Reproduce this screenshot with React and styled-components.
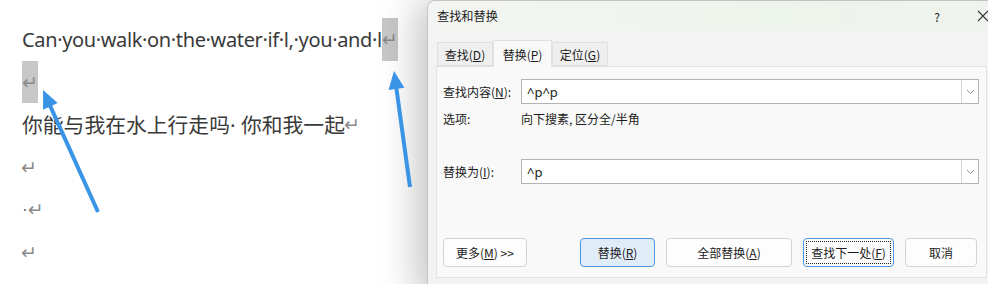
import React from 'react';
import styled, { createGlobalStyle } from 'styled-components';

const GlobalStyle = createGlobalStyle`
  html, body {
    margin: 0;
    padding: 0;
    background: #ffffff;
    overflow: hidden;
  }
`;

const arrowBlue = '#3a94e6';
const uiFont = `"Noto Sans CJK SC", "Noto Sans", sans-serif`;

const Page = styled.div`
  position: relative;
  display: flex;
  width: 988px;
  height: 284px;
  overflow: hidden;
  background: #ffffff;
`;

const Doc = styled.div`
  flex: 0 0 427px;
  padding: 18px 0 0 22px;
  box-sizing: border-box;
  font-family: "Noto Sans", "Noto Sans CJK SC", sans-serif;
  color: #3a3a3a;
`;

const Line = styled.div`
  display: flex;
  align-items: center;
  height: 42.5px;
  white-space: pre;
  font-size: ${p => p.$size || 20.5}px;
`;

const Words = styled.span`
  letter-spacing: ${p => p.$tight || 0}px;
`;

const Mark = styled.span`
  display: inline-flex;
  align-items: center;
  justify-content: center;
  width: ${p => (p.$boxed ? '16px' : '14px')};
  height: ${p => (p.$boxed ? '100%' : 'auto')};
  background: ${p => (p.$boxed ? '#c7c7c7' : 'transparent')};
  font-family: "DejaVu Sans", sans-serif;
  font-size: 19px;
  letter-spacing: 0;
  color: #8a8a8a;
`;

const Dot = styled.span`
  font-size: 14px;
  color: #555;
  margin: 0 2px 0 1px;
`;

const Dialog = styled.div`
  flex: 0 0 580px;
  height: 300px;
  box-sizing: border-box;
  border: 1px solid #c4c4c4;
  border-radius: 8px 8px 0 0;
  background: #f3f3f3;
  box-shadow: -8px 0 40px rgba(0, 0, 0, 0.26);
  font-family: ${uiFont};
  font-size: 12px;
  color: #1b1b1b;
  z-index: 1;
`;

const TitleBar = styled.div`
  display: flex;
  align-items: center;
  height: 30px;
  padding-left: 9px;
  border-radius: 8px 0 0 0;
  background: linear-gradient(90deg, #f3f5f2 0%, #edf4eb 60%, #eff3ee 100%);
`;

const Title = styled.span`
  flex: 1;
  font-size: 12.2px;
`;

const TitleButton = styled.span`
  display: flex;
  align-items: center;
  justify-content: center;
  width: 46px;
  font-size: 12px;
  color: #222;
`;

const TabList = styled.div`
  display: flex;
  align-items: flex-end;
  height: 35px;
  padding-left: 9px;
  position: relative;
  z-index: 1;
`;

const Tab = styled.div`
  display: flex;
  align-items: center;
  justify-content: center;
  box-sizing: border-box;
  width: ${p => p.$width}px;
  height: ${p => (p.$active ? 27 : 24)}px;
  margin-bottom: ${p => (p.$active ? -1 : 0)}px;
  border: 1px solid #e0e0e0;
  border-bottom: ${p => (p.$active ? 'none' : '1px solid #e0e0e0')};
  background: ${p => (p.$active ? '#f9f9f9' : '#efefef')};
  font-size: 12px;
`;

const Panel = styled.div`
  margin-left: 8px;
  width: 551px;
  height: 212px;
  box-sizing: border-box;
  border: 1px solid #e2e2e2;
  background: #f9f9f9;
  padding: 12px 0 0 6px;
  display: flex;
  flex-direction: column;
`;

const FieldRow = styled.div`
  display: flex;
  align-items: center;
  height: 25px;
  margin-top: ${p => p.$top || 0}px;
`;

const Label = styled.span`
  width: 78px;
  flex: 0 0 78px;
`;

const Combo = styled.div`
  display: flex;
  width: 458px;
  height: 25px;
  box-sizing: border-box;
  border: 1px solid #b4b4b4;
  background: #ffffff;
`;

const ComboText = styled.span`
  flex: 1;
  display: flex;
  align-items: center;
  padding-left: 5px;
  font-family: "Noto Sans", sans-serif;
  font-size: 13px;
  color: #222;
`;

const ComboArrow = styled.span`
  width: 16px;
  display: flex;
  align-items: center;
  justify-content: center;
  border-left: 1px solid #d6d6d6;
`;

const OptionsRow = styled.div`
  display: flex;
  align-items: center;
  height: 16px;
  margin-top: 6px;
`;

const ButtonRow = styled.div`
  display: flex;
  gap: 11px;
  margin-top: 54px;
`;

const Button = styled.div`
  position: relative;
  display: flex;
  align-items: center;
  justify-content: center;
  box-sizing: border-box;
  width: ${p => p.$width}px;
  height: 29px;
  margin-right: ${p => p.$gapAfter || 0}px;
  border: 1px solid ${p => (p.$primary || p.$focused ? '#4c97dc' : '#d3d3d3')};
  border-radius: 4px;
  background: ${p => (p.$primary ? '#e0edf9' : '#fdfdfd')};
  font-size: 12px;
  color: #1b1b1b;
  ${p =>
    p.$focused &&
    `
    &::after {
      content: '';
      position: absolute;
      inset: 2px;
      border: 1px dotted #222;
    }
  `}
`;

const Overlay = styled.svg`
  position: absolute;
  top: 0;
  left: 0;
  z-index: 2;
  pointer-events: none;
`;

const Chevron = () => (
  <svg width="9" height="6" viewBox="0 0 9 6">
    <path d="M1 1 L4.5 4.5 L8 1" fill="none" stroke="#8a8a8a" strokeWidth="1" />
  </svg>
);

const CloseIcon = () => (
  <svg width="12" height="12" viewBox="0 0 12 12">
    <path d="M1 1 L11 11 M11 1 L1 11" stroke="#333" strokeWidth="1.1" />
  </svg>
);

const Arrow = ({ from, to }) => {
  const dx = to[0] - from[0];
  const dy = to[1] - from[1];
  const len = Math.hypot(dx, dy);
  const ux = dx / len;
  const uy = dy / len;
  const head = 18;
  const half = 8;
  const bx = to[0] - ux * head;
  const by = to[1] - uy * head;
  const p1 = [bx - uy * half, by + ux * half];
  const p2 = [bx + uy * half, by - ux * half];
  return (
    <g>
      <line x1={from[0]} y1={from[1]} x2={bx + ux * 2} y2={by + uy * 2} stroke={arrowBlue} strokeWidth="4" />
      <polygon points={`${to[0]},${to[1]} ${p1[0]},${p1[1]} ${p2[0]},${p2[1]}`} fill={arrowBlue} />
    </g>
  );
};

export default function App() {
  return (
    <>
      <GlobalStyle />
      <Page>
        <Doc>
          <Line $size={20}>
            <Words $tight={-0.36}>Can·you·walk·on·the·water·if·l,·you·and·l</Words>
            <Mark $boxed>↵</Mark>
          </Line>
          <Line>
            <Mark $boxed>↵</Mark>
          </Line>
          <Line $size={20.8}>
            <Words>你能与我在水上行走吗· 你和我一起</Words>
            <Mark>↵</Mark>
          </Line>
          <Line>
            <Mark>↵</Mark>
          </Line>
          <Line>
            <Dot>·</Dot>
            <Mark>↵</Mark>
          </Line>
          <Line>
            <Mark>↵</Mark>
          </Line>
        </Doc>

        <Dialog>
          <TitleBar>
            <Title>查找和替换</Title>
            <TitleButton>?</TitleButton>
            <TitleButton>
              <CloseIcon />
            </TitleButton>
          </TitleBar>
          <TabList>
            <Tab $width={56}>
              查找(<u>D</u>)
            </Tab>
            <Tab $width={59} $active>
              替换(<u>P</u>)
            </Tab>
            <Tab $width={56}>
              定位(<u>G</u>)
            </Tab>
          </TabList>
          <Panel>
            <FieldRow>
              <Label>
                查找内容(<u>N</u>):
              </Label>
              <Combo>
                <ComboText>^p^p</ComboText>
                <ComboArrow>
                  <Chevron />
                </ComboArrow>
              </Combo>
            </FieldRow>
            <OptionsRow>
              <Label>选项:</Label>
              <span>向下搜素, 区分全/半角</span>
            </OptionsRow>
            <FieldRow $top={33}>
              <Label>
                替换为(<u>I</u>):
              </Label>
              <Combo>
                <ComboText>^p</ComboText>
                <ComboArrow>
                  <Chevron />
                </ComboArrow>
              </Combo>
            </FieldRow>
            <ButtonRow>
              <Button $width={84} $gapAfter={42}>
                更多(<u>M</u>) &gt;&gt;
              </Button>
              <Button $width={75} $primary>
                替换(<u>R</u>)
              </Button>
              <Button $width={126}>
                全部替换(<u>A</u>)
              </Button>
              <Button $width={91} $focused>
                查找下一处(<u>F</u>)
              </Button>
              <Button $width={72}>取消</Button>
            </ButtonRow>
          </Panel>
        </Dialog>

        <Overlay width="988" height="284" viewBox="0 0 988 284">
          <Arrow from={[98, 212]} to={[43, 90]} />
          <Arrow from={[410, 187]} to={[394, 71]} />
        </Overlay>
      </Page>
    </>
  );
}
